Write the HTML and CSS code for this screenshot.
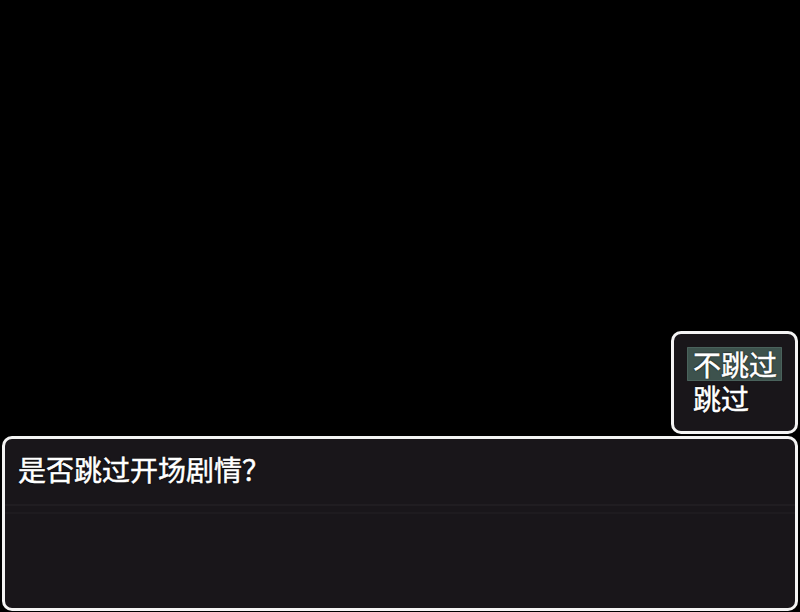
FILE: index.html
```html
<!DOCTYPE html>
<html lang="zh-CN">
<head>
<meta charset="utf-8">
<title>是否跳过开场剧情？</title>
<link rel="stylesheet" href="styles.css">
</head>
<body>
  <main class="screen">
    <div class="choice-window">
      <div class="choice selected">不跳过</div>
      <div class="choice">跳过</div>
    </div>
    <div class="message-window">
      <p class="message">是否跳过开场剧情？</p>
    </div>
  </main>
</body>
</html>
```

FILE: styles.css
```css
html, body {
  margin: 0;
  padding: 0;
  background: #000;
}

.screen {
  width: 800px;
  height: 612px;
  display: flex;
  flex-direction: column;
  justify-content: flex-end;
  align-items: flex-end;
  gap: 2px;
  font-family: "Noto Sans CJK SC", "Noto Sans", sans-serif;
  font-weight: 400;
  color: #fff;
  font-size: 28px;
  overflow: hidden;
}

/* shared window frame: white rounded border on a dark panel */
.choice-window,
.message-window {
  box-sizing: border-box;
  border: 3px solid #f4f4f4;
  border-radius: 10px;
  background-color: #19161a;
}

.choice-window {
  width: 127px;
  height: 103px;
  margin-right: 2px;
  padding: 13px 13px 0 13px;
  display: flex;
  flex-direction: column;
}

.choice {
  height: 34px;
  line-height: 34px;
  padding-left: 6px;
  text-shadow: 0 0 2px #000, 0 0 1px #000;
  -webkit-text-stroke: 0.5px #fff;
  white-space: nowrap;
}

.choice.selected {
  background: #3d524d;
  box-shadow: inset 0 0 0 1px #4a625c;
  border-radius: 1px;
}

/* the message panel carries two faint scan lines */
.message-window {
  width: 796px;
  height: 175px;
  margin: 0 2px 1px 2px;
  padding: 12px 13px;
  background-image:
    linear-gradient(rgba(255, 255, 255, 0.03), rgba(255, 255, 255, 0.03)),
    linear-gradient(rgba(255, 255, 255, 0.025), rgba(255, 255, 255, 0.025));
  background-repeat: no-repeat;
  background-size: 100% 2px, 100% 2px;
  background-position: 0 65px, 0 73px;
}

.message {
  margin: 0;
  line-height: 36px;
  text-shadow: 0 0 2px #000, 0 0 1px #000;
  -webkit-text-stroke: 0.5px #fff;
}
```
